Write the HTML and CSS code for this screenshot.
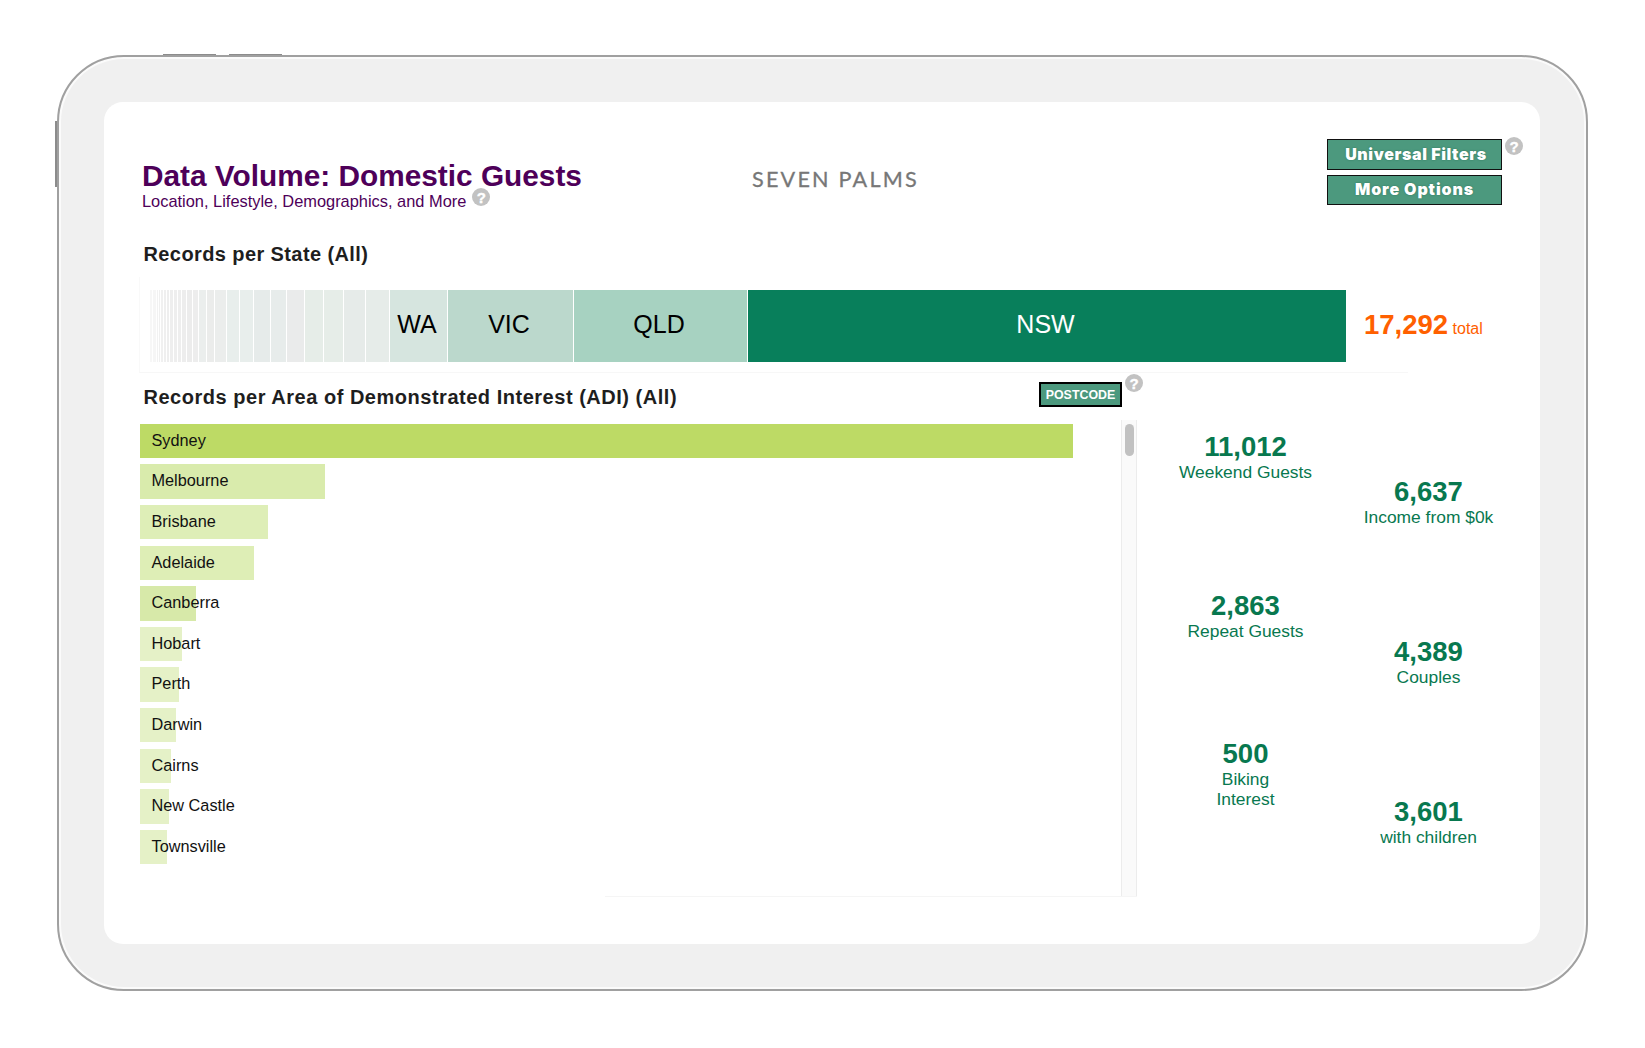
FILE: index.html
```html
<!DOCTYPE html>
<html lang="en">

    <head>
        <!-- Meta Data -->
        <meta charset="UTF-8">

        <!-- Title -->
        <title>Seven Palms - Data Volume</title>

        <!-- Style -->
        <link rel="stylesheet" href="styles.css">
    </head>

    <body>
        <div class="tablet">
            <!-- Hardware buttons -->
            <span class="key key-top-1"></span>
            <span class="key key-top-2"></span>
            <span class="key key-side"></span>

            <main class="screen">
                <!-- Header -->
                <header class="header">
                    <div class="titles">
                        <h1>Data Volume: Domestic Guests</h1>
                        <p class="subtitle">Location, Lifestyle, Demographics, and More <span class="help">?</span></p>
                    </div>
                    <div class="brand">SEVEN PALMS</div>
                    <div class="actions">
                        <div class="buttons">
                            <button class="btn">Universal Filters</button>
                            <button class="btn btn-more">More Options</button>
                        </div>
                        <span class="help">?</span>
                    </div>
                </header>

                <!-- Records per state -->
                <h2>Records per State (All)</h2>
                <section class="states">
                    <div class="state-bar" id="state-bar"></div>
                    <div class="total"><b>17,292</b> total</div>
                </section>

                <!-- Records per area -->
                <section class="lower">
                    <div class="areas">
                        <div class="areas-head">
                            <h2>Records per Area of Demonstrated Interest (ADI) (All)</h2>
                            <button class="btn-postcode">POSTCODE</button>
                            <span class="help">?</span>
                        </div>
                        <div class="areas-body">
                            <div class="area-list" id="area-list"></div>
                            <div class="track"><div class="thumb"></div></div>
                        </div>
                        <div class="areas-end"></div>
                    </div>

                    <div class="stats stats-left">
                        <div class="stat"><b>11,012</b><span>Weekend Guests</span></div>
                        <div class="stat"><b>2,863</b><span>Repeat Guests</span></div>
                        <div class="stat"><b>500</b><span>Biking<br>Interest</span></div>
                    </div>
                    <div class="stats stats-right">
                        <div class="stat"><b>6,637</b><span>Income from $0k</span></div>
                        <div class="stat"><b>4,389</b><span>Couples</span></div>
                        <div class="stat"><b>3,601</b><span>with children</span></div>
                    </div>
                </section>
            </main>
        </div>

        <!-- Scripts -->
        <script src="charts.js"></script>
    </body>

</html>
```

FILE: styles.css
```css
* {
    box-sizing: border-box;
}

body {
    margin: 0;
    padding: 55px 57px;
    background: #fff;
    font-family: "Liberation Sans", Arial, sans-serif;
}

h1, h2, p {
    margin: 0;
}

/* Device */
.tablet {
    position: relative;
    width: 1531px;
    height: 936px;
    padding: 45px 46px 45px 45px;
    border: 2px solid #a0a0a0;
    border-radius: 67px;
    background: #f0f0f0;
    box-shadow: inset 0 0 0 2px #fbfbfb;
}

.key {
    position: absolute;
    background: #8c8c8c;
}

.key-top-1 {
    left: 104px;
    top: -3px;
    width: 53px;
    height: 1px;
}

.key-top-2 {
    left: 170px;
    top: -3px;
    width: 53px;
    height: 1px;
}

.key-side {
    left: -4px;
    top: 64px;
    width: 2px;
    height: 66px;
}

.screen {
    height: 842px;
    border-radius: 19px;
    background: #fff;
}

/* Header */
.header {
    display: flex;
    height: 140px;
    padding-left: 38px;
}

.titles {
    width: 610px;
    padding-top: 57px;
    color: #4e0059;
    white-space: nowrap;
}

h1 {
    font-size: 29.8px;
    line-height: 34px;
}

.subtitle {
    display: flex;
    gap: 6px;
    margin-top: -2px;
    font-size: 16.4px;
    line-height: 20px;
}

.help {
    flex: none;
    width: 18px;
    height: 18px;
    border-radius: 50%;
    background: #c2c2c2;
    color: #fff;
    font-size: 15px;
    font-weight: bold;
    line-height: 19px;
    text-align: center;
    -webkit-text-stroke: 0.4px #fff;
}

.subtitle .help {
    margin-top: -3px;
}

.brand {
    width: 575px;
    padding-top: 63px;
    color: #777;
    font-family: Lato, sans-serif;
    font-size: 21.6px;
    line-height: 28px;
    letter-spacing: 2.2px;
    -webkit-text-stroke: 0.3px #777;
}

.actions {
    display: flex;
    gap: 3px;
    padding-top: 35px;
}

.buttons {
    display: flex;
    flex-direction: column;
    gap: 5px;
    padding-top: 2px;
}

.btn {
    width: 175px;
    height: 30.5px;
    padding: 0 0 1px;
    border: 1px solid #111;
    background: #4c997e;
    color: #fff;
    font-family: Inter, sans-serif;
    font-size: 16px;
    font-weight: 900;
    letter-spacing: 0.6px;
    text-shadow: 0 0 2px #2f755c;
}

.btn:first-child {
    padding-left: 3px;
}

.btn-more {
    letter-spacing: 0.9px;
}

h2 {
    padding-left: 39.5px;
    color: #1e1e1e;
    font-size: 20px;
    line-height: 24px;
    letter-spacing: 0.4px;
    white-space: nowrap;
}

/* State bar */
.states {
    display: flex;
    width: 1269px;
    height: 96px;
    margin: 11px 0 0 35px;
    padding: 13px 0 0 10px;
    border-left: 1px solid #f9f9f9;
    border-bottom: 1px solid #f7f7f7;
}

.state-bar {
    display: flex;
    flex: none;
    width: 1197px;
    height: 72px;
}

.state {
    flex: none;
    border-right: 1px solid #fff;
    font-size: 25px;
    line-height: 68px;
    text-align: center;
    text-indent: -3px;
}

.state:last-child {
    border: 0;
    color: #fff;
}

.total {
    flex: none;
    padding-left: 17px;
    color: #ff6000;
    font-size: 16px;
    line-height: 70px;
    white-space: nowrap;
}

.total b {
    font-size: 27.5px;
}

/* Areas */
.lower {
    display: flex;
    height: 524px;
}

.areas {
    width: 1050px;
}

.areas-head {
    display: flex;
    height: 47px;
}

.areas-head h2 {
    width: 935px;
    padding-top: 12px;
    letter-spacing: 0.52px;
}

.btn-postcode {
    width: 83px;
    height: 25px;
    margin: 9px 3px 0 0;
    padding: 0;
    border: 2px solid #000;
    background: #4c997e;
    color: #fff;
    font-family: "Liberation Sans", Arial, sans-serif;
    font-size: 12.4px;
    font-weight: bold;
}

.areas-head .help {
    margin-top: 1px;
}

.areas-body {
    display: flex;
    height: 476px;
    padding-left: 36px;
}

.areas-end {
    width: 532px;
    height: 1px;
    margin-left: 501px;
    background: #f5f5f5;
}

.area-list {
    display: flex;
    flex-direction: column;
    gap: 6.3px;
    width: 981px;
    padding-top: 3.7px;
}

.area {
    height: 34.33px;
    padding-left: 11.5px;
    color: #111;
    font-size: 16.3px;
    line-height: 32.5px;
    white-space: nowrap;
}

.track {
    width: 16px;
    padding: 4px 0 0 3px;
    border: solid #ececec;
    border-width: 0 1px;
    background: #fafafa;
}

.thumb {
    width: 9px;
    height: 32px;
    border-radius: 4.5px;
    background: #c1c1c1;
}

/* Stats */
.stats {
    display: flex;
    flex-direction: column;
    width: 183px;
    color: #08784f;
    text-align: center;
}

.stats-left {
    gap: 107px;
    padding-top: 58px;
}

.stats-left .stat:last-child {
    margin-top: -11px;
}

.stats-right {
    gap: 108px;
    padding-top: 102.5px;
}

.stat {
    display: flex;
    flex-direction: column;
    font-size: 17.4px;
    line-height: 20px;
}

.stat b {
    font-size: 27.5px;
    line-height: 32px;
}

.stat span {
    margin-top: -1px;
    padding-bottom: 1px;
}
```

FILE: charts.js
```js
// Segments of the state bar: width, colour, label
const states = [
    [3, '#f7f7f7'], [4, '#f6f6f6'], [2, '#f2f2f2'], [2, '#f0f0f0'], [3, '#f0f0f0'],
    [3, '#efefef'], [3, '#eeeeee'], [4, '#eeeeee'], [4, '#eeeeee'], [4, '#eeeeee'],
    [5, '#ededed'], [6, '#ececec'], [6, '#ededed'], [8, '#ebeeed'], [8, '#ebeceb'],
    [12, '#ebedec'], [13, '#e8eeec'], [14, '#e8eeec'], [17, '#e6ebea'], [16, '#e7eceb'],
    [18, '#eaebeb'], [19, '#e6ede8'], [20, '#e6ede8'], [22, '#e6ebe9'], [24, '#e6ece9'],
    [58, '#d6e5df', 'WA'], [126, '#bbd8cc', 'VIC'], [174, '#a7d2c1', 'QLD'], [598, '#087f5b', 'NSW']
];

// Rows of the area chart: name, width, colour
const areas = [
    ['Sydney', 933, '#bdda65'],
    ['Melbourne', 185, '#d9ebac'],
    ['Brisbane', 127.5, '#deeeb7'],
    ['Adelaide', 114, '#deeeb6'],
    ['Canberra', 56, '#d7e9a9'],
    ['Hobart', 42, '#e5f1c7'],
    ['Perth', 39, '#e5f1c7'],
    ['Darwin', 36, '#e5f1c7'],
    ['Cairns', 31, '#e5f1c7'],
    ['New Castle', 29, '#e5f1c7'],
    ['Townsville', 27, '#e5f1c7']
];

function addBar(parent, className, label, width, color)
{
    const bar = document.createElement('div');
    bar.className = className;
    bar.style.width = width + 'px';
    bar.style.backgroundColor = color;
    bar.textContent = label || '';
    parent.appendChild(bar);
}

const stateBar = document.getElementById('state-bar');
states.forEach(([width, color, label]) => addBar(stateBar, 'state', label, width, color));

const areaList = document.getElementById('area-list');
areas.forEach(([name, width, color]) => addBar(areaList, 'area', name, width, color));
```
